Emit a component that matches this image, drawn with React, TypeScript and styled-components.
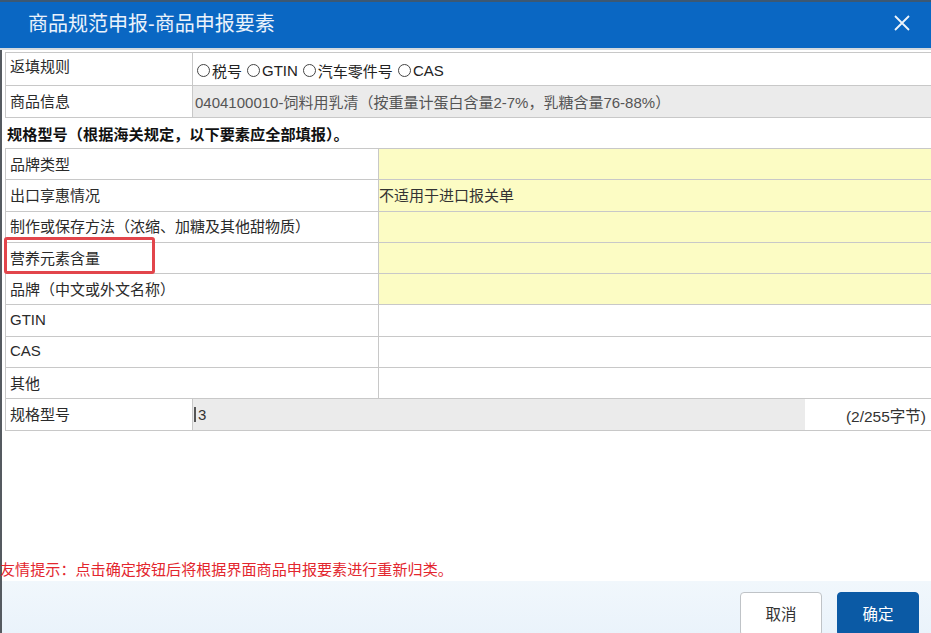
import styled, { createGlobalStyle } from 'styled-components';

const GlobalStyle = createGlobalStyle`
    html, body {
        margin: 0;
        padding: 0;
        background: #ffffff;
        overflow: hidden;
    }
    body {
        font-family: "Liberation Sans", "Noto Sans CJK SC", sans-serif;
        color: #222;
    }
`;

interface ElementRow {
    label: string
    value?: string
    required?: boolean
    marked?: boolean
}

const elements: ElementRow[] = [
    { label: '品牌类型', required: true },
    { label: '出口享惠情况', value: '不适用于进口报关单', required: true },
    { label: '制作或保存方法（浓缩、加糖及其他甜物质）', required: true },
    { label: '营养元素含量', required: true, marked: true },
    { label: '品牌（中文或外文名称）', required: true },
    { label: 'GTIN' },
    { label: 'CAS' },
    { label: '其他' },
];

const rules = ['税号', 'GTIN', '汽车零件号', 'CAS'];

const CloseIcon = () => (
    <svg width="18" height="18" viewBox="0 0 18 18">
        <path d="M2 2 L16 16 M16 2 L2 16" stroke="#eef4fb" strokeWidth="1.8" fill="none" />
    </svg>
);

export default function App() {
    return (
        <>
            <GlobalStyle />
            <Dialog>
                <TitleBar>
                    <Title>商品规范申报-商品申报要素</Title>
                    <CloseButton><CloseIcon /></CloseButton>
                </TitleBar>
                <Body>
                    <FormTable>
                        <Row $height={33}>
                            <Label $raised>返填规则</Label>
                            <Cell>
                                <RadioGroup>
                                    {rules.map(r => (
                                        <RadioItem key={r}>
                                            <RadioDot />
                                            {r}
                                        </RadioItem>
                                    ))}
                                </RadioGroup>
                            </Cell>
                        </Row>
                        <Row $height={32}>
                            <Label>商品信息</Label>
                            <Cell $bg="#ebebeb" $muted>
                                0404100010-饲料用乳清（按重量计蛋白含量2-7%，乳糖含量76-88%）
                            </Cell>
                        </Row>
                    </FormTable>
                    <SectionHeading>规格型号（根据海关规定，以下要素应全部填报）。</SectionHeading>
                    <ElementTable>
                        {elements.map(el => (
                            <ElementLine key={el.label}>
                                <ElementLabel>
                                    {el.label}
                                    {el.marked && <Highlight />}
                                </ElementLabel>
                                <ElementValue $required={el.required}>{el.value}</ElementValue>
                            </ElementLine>
                        ))}
                        <SpecLine>
                            <Label>规格型号</Label>
                            <SpecInput>
                                <Caret />3
                            </SpecInput>
                            <Counter>(2/255字节)</Counter>
                        </SpecLine>
                    </ElementTable>
                    <Spacer />
                    <Hint>友情提示：点击确定按钮后将根据界面商品申报要素进行重新归类。</Hint>
                </Body>
                <Footer>
                    <FooterButton>取消</FooterButton>
                    <FooterButton $primary>确定</FooterButton>
                </Footer>
            </Dialog>
        </>
    );
}

const Dialog = styled.div`
    width: 931px;
    height: 633px;
    display: flex;
    flex-direction: column;
    overflow: hidden;
`;

const TitleBar = styled.div`
    height: 46px;
    flex-shrink: 0;
    display: flex;
    align-items: center;
    justify-content: space-between;
    padding: 0 20px 0 28px;
    background: #0a67c3;
    border-top: 2px solid #3c5873;
    border-bottom: 2px solid #d3d9de;
`;

const Title = styled.div`
    font-size: 20px;
    color: #eaf2fb;
    margin-top: -5px;
`;

const CloseButton = styled.div`
    display: flex;
    align-items: center;
    margin-top: -5px;
`;

const Body = styled.div`
    flex: 1;
    display: flex;
    flex-direction: column;
    border-left: 2px solid #555a60;
    padding: 2px 0 0 3px;
    font-size: 15px;
`;

const FormTable = styled.div`
    width: 940px;
    border-top: 1px solid #c8c8c8;
    border-left: 1px solid #c8c8c8;
`;

const Row = styled.div<{ $height: number }>`
    display: grid;
    grid-template-columns: 187px 1fr;
    height: ${({ $height }) => $height}px;
    box-sizing: border-box;
    border-bottom: 1px solid #c8c8c8;
`;

const Label = styled.div<{ $raised?: boolean }>`
    display: flex;
    align-items: center;
    padding: 0 0 ${({ $raised }) => $raised ? 7 : 2}px 4px;
    border-right: 1px solid #c8c8c8;
    color: #2a2a2a;
    white-space: nowrap;
`;

const Cell = styled.div<{ $bg?: string, $muted?: boolean }>`
    display: flex;
    align-items: center;
    padding: 0 0 0 2px;
    background: ${({ $bg }) => $bg || '#fff'};
    color: ${({ $muted }) => $muted ? '#555' : '#222'};
    white-space: nowrap;
`;

const RadioGroup = styled.div`
    display: flex;
    align-items: center;
    gap: 5px;
    padding-top: 3px;
    padding-left: 2px;
`;

const RadioItem = styled.label`
    display: flex;
    align-items: center;
    gap: 1px;
`;

const RadioDot = styled.span`
    width: 13px;
    height: 13px;
    border: 1px solid #444;
    border-radius: 50%;
    box-sizing: border-box;
    margin-right: 1px;
`;

const SectionHeading = styled.div`
    height: 30px;
    display: flex;
    align-items: center;
    padding-left: 2px;
    font-weight: bold;
    color: #111;
    font-size: 15.2px;
`;

const ElementTable = styled.div`
    width: 940px;
    border-top: 1px solid #c8c8c8;
    border-left: 1px solid #c8c8c8;
`;

const ElementLine = styled.div`
    display: grid;
    grid-template-columns: 373px 1fr;
    height: 31.3px;
    box-sizing: border-box;
    border-bottom: 1px solid #c8c8c8;
`;

const ElementLabel = styled.div`
    position: relative;
    display: flex;
    align-items: center;
    padding: 0 0 2px 4px;
    border-right: 1px solid #c8c8c8;
    color: #2a2a2a;
    white-space: nowrap;
`;

const Highlight = styled.span`
    position: absolute;
    left: -2px;
    top: -6px;
    width: 151px;
    height: 37px;
    border: 3px solid #e2454b;
    border-radius: 3px;
    box-sizing: border-box;
    pointer-events: none;
`;

const ElementValue = styled.div<{ $required?: boolean }>`
    display: flex;
    align-items: center;
    padding-bottom: 1px;
    background: ${({ $required }) => $required ? '#fcfcc4' : '#fff'};
    color: #333;
    white-space: nowrap;
`;

const SpecLine = styled.div`
    display: grid;
    grid-template-columns: 187px 612px 1fr;
    height: 32px;
    box-sizing: border-box;
    border-bottom: 1px solid #c8c8c8;
`;

const SpecInput = styled.div`
    display: flex;
    align-items: center;
    background: #ebebeb;
    color: #333;
    padding-left: 1px;
`;

const Caret = styled.span`
    width: 2px;
    height: 15px;
    background: #555;
    margin-right: 2px;
`;

const Counter = styled.div`
    display: flex;
    align-items: center;
    justify-content: flex-end;
    padding-right: 20px;
    color: #333;
    font-size: 15.5px;
    white-space: nowrap;
`;

const Spacer = styled.div`
    flex: 1;
`;

const Hint = styled.div`
    margin-left: -5px;
    padding-bottom: 2px;
    color: #e3262e;
    font-size: 15.1px;
    white-space: nowrap;
`;

const Footer = styled.div`
    height: 52px;
    flex-shrink: 0;
    display: flex;
    justify-content: flex-end;
    align-items: flex-start;
    gap: 15px;
    padding: 11px 12px 0 0;
    box-sizing: border-box;
    background: linear-gradient(#f1f7fc, #eaf3fb);
    border-left: 2px solid #555a60;
`;

const FooterButton = styled.button<{ $primary?: boolean }>`
    width: 82px;
    height: 44px;
    flex-shrink: 0;
    border-radius: 4px;
    border: 1px solid ${({ $primary }) => $primary ? '#0b5aa5' : '#bfc3c7'};
    background: ${({ $primary }) => $primary ? '#0b5aa5' : '#fff'};
    color: ${({ $primary }) => $primary ? '#fff' : '#333'};
    font-family: "Liberation Sans", "Noto Sans CJK SC", sans-serif;
    font-size: 15.5px;
    padding: 0 0 11px;
    display: flex;
    align-items: flex-end;
    justify-content: center;
`;
